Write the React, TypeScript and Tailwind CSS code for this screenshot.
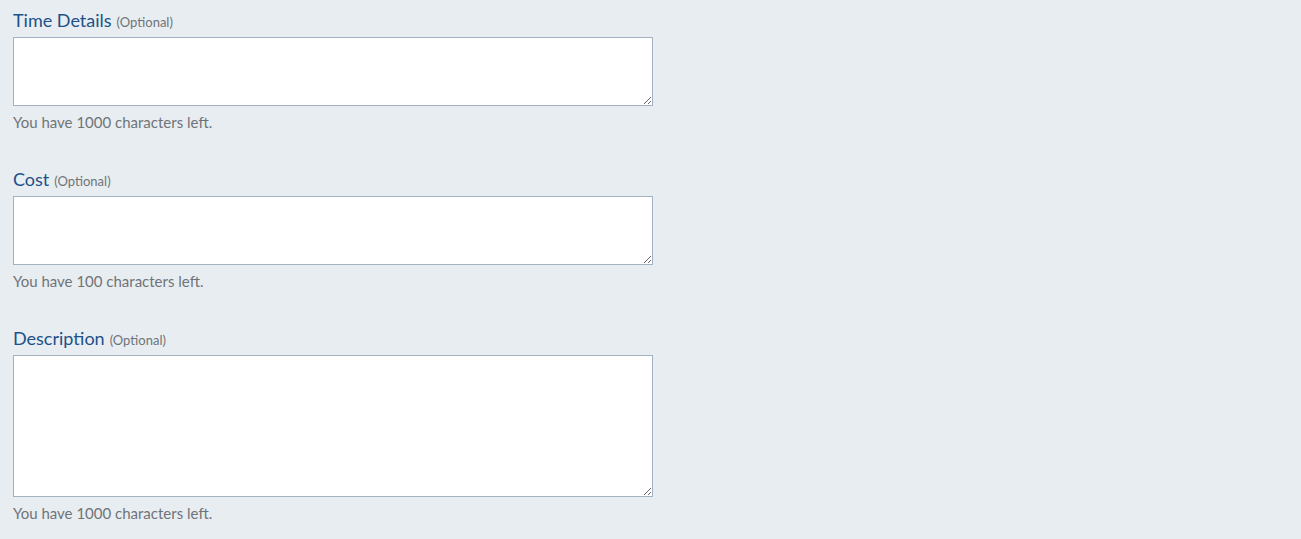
const font = { fontFamily: '"Lato", "Noto Sans", sans-serif' };

interface FieldProps {
  label: string;
  limit: number;
  height: string;
}

function Field({ label, limit, height }: FieldProps) {
  return (
    <div className="w-[640px]">
      <label className="flex items-baseline gap-[5px] h-[24px] leading-[24px] mb-[5px]">
        <span className="text-[18px] text-[#1d5189]">{label}</span>
        <span className="text-[13px] text-[#6f7478]">(Optional)</span>
      </label>
      <textarea
        className={`block w-full ${height} bg-white border border-[#a3b1c0] outline-none resize-y`}
      />
      <p className="mt-[6px] text-[15px] leading-[20px] text-[#6f7478]">
        You have {limit} characters left.
      </p>
    </div>
  );
}

export default function App() {
  return (
    <div className="min-h-screen bg-[#e8edf1] pl-[13px] pt-[8px]" style={font}>
      <div className="flex flex-col gap-[35px]">
        <Field label="Time Details" limit={1000} height="h-[69px]" />
        <Field label="Cost" limit={100} height="h-[69px]" />
        <Field label="Description" limit={1000} height="h-[142px]" />
      </div>
    </div>
  );
}
